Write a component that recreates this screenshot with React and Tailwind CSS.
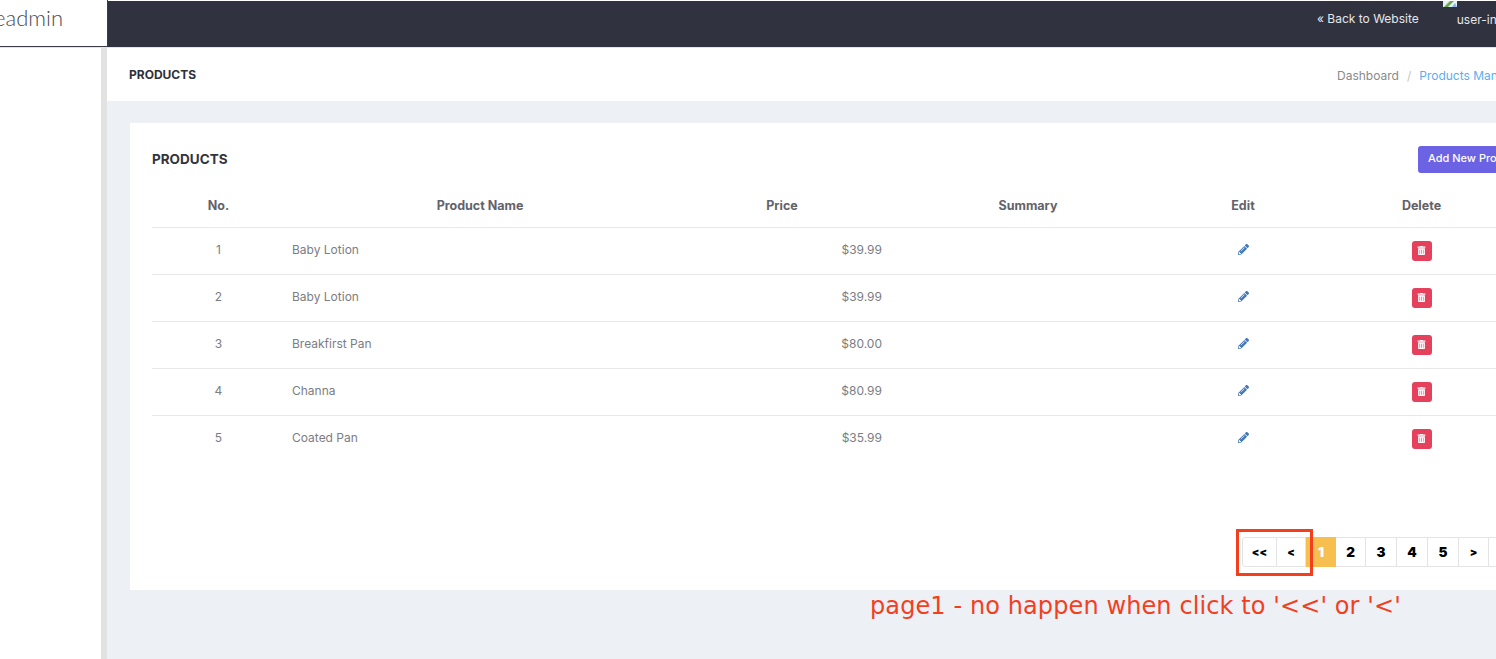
import React from "react";
import { FaPencilAlt, FaTrashAlt } from "react-icons/fa";

const rows = [
  ["1", "Baby Lotion", "$39.99"],
  ["2", "Baby Lotion", "$39.99"],
  ["3", "Breakfirst Pan", "$80.00"],
  ["4", "Channa", "$80.99"],
  ["5", "Coated Pan", "$35.99"],
];

const pages = [
  ["<<", "w-[35px]", "text-[11px]"],
  ["<", "w-[29px]", "text-[11px]"],
  ["1", "w-[30px]", "text-[13.5px]"],
  ["2", "w-[30px]", "text-[13.5px]"],
  ["3", "w-[31px]", "text-[13.5px]"],
  ["4", "w-[31px]", "text-[13.5px]"],
  ["5", "w-[31px]", "text-[13.5px]"],
  [">", "w-[30px]", "text-[11px]"],
  [">>", "w-[35px]", "text-[11px]"],
];

function BrokenImage() {
  return (
    <svg width="14" height="6" viewBox="0 0 14 6" className="block">
      <rect x="0" y="0" width="14" height="6" fill="#e8eef4" />
      <path d="M1 6 L7 0 L11 0 L5 6 Z" fill="#6aa84f" />
      <path d="M9 6 L12 2 L14 6 Z" fill="#8ab4e8" />
    </svg>
  );
}

export default function App() {
  return (
    <div className="relative h-[659px] w-[1496px] overflow-hidden bg-white font-['Inter','Liberation_Sans',sans-serif]">
      <header className="flex h-[48px] border-b border-b-[#e4e5e9]">
        <div className="flex w-[108px] shrink-0 items-center justify-end overflow-hidden border-b border-r border-[#3a3b47] bg-white pb-[12px] pr-[44px]">
          <span className="whitespace-nowrap font-['Lato',sans-serif] text-[22px] font-light text-[#4a4b55]">eadmin</span>
        </div>
        <div className="mt-px flex flex-1 overflow-hidden bg-[#30323f]">
          <a className="ml-[1209px] mt-[10px] whitespace-nowrap text-[12px] leading-4 text-[#e6e7ea]">« Back to Website</a>
          <div className="ml-[24px] flex flex-col">
            <BrokenImage />
            <span className="ml-[14px] mt-[5px] whitespace-nowrap text-[12px] leading-4 text-[#e6e7ea]">user-info</span>
          </div>
        </div>
      </header>

      <div className="flex h-[611px]">
        <aside className="flex w-[107px] shrink-0 justify-end bg-white">
          <div className="h-full w-[6px] bg-[#e2e2e2]" />
        </aside>
        <main className="flex-1 overflow-hidden bg-[#edf0f5]">
          <div className="flex h-[53px] w-[1480px] items-center bg-white pl-[22px]">
            <h1 className="w-[1208px] shrink-0 text-[12px] font-bold text-[#2f3038]">PRODUCTS</h1>
            <nav className="flex items-center whitespace-nowrap pt-[2px] text-[12px]">
              <span className="text-[#8a8a8a]">Dashboard</span>
              <span className="mx-[8px] text-[#c4c4c4]">/</span>
              <span className="text-[#5aaef0]">Products Management</span>
            </nav>
          </div>

          <section className="ml-[23px] mt-[22px] h-[467px] w-[1430px] bg-white px-[22px] pt-[23px]">
            <div className="flex h-[27px] items-center justify-between">
              <h2 className="text-[13.5px] font-bold text-[#33343c]">PRODUCTS</h2>
              <button className="h-[27px] w-[120px] whitespace-nowrap rounded-[3px] bg-[#6c63e4] pb-[2px] pl-[10px] text-left text-[11px] font-medium text-white">Add New Product</button>
            </div>
            <table className="mt-[9px] w-[1372px] table-fixed border-collapse text-[12px]">
              <colgroup>
                <col className="w-[133px]" />
                <col className="w-[390px]" />
                <col className="w-[214px]" />
                <col className="w-[278px]" />
                <col className="w-[152px]" />
                <col className="w-[205px]" />
              </colgroup>
              <thead>
                <tr className="h-[45px] border-b border-b-[#e8e8e8] text-[12.5px] font-semibold text-[#62636a]">
                  <th className="pt-[5px] text-center">No.</th>
                  <th className="pt-[5px] text-center">Product Name</th>
                  <th className="pt-[5px] text-center">Price</th>
                  <th className="pt-[5px] text-center">Summary</th>
                  <th className="pt-[5px] text-center">Edit</th>
                  <th className="pt-[5px] text-center">Delete</th>
                </tr>
              </thead>
              <tbody className="text-[#7c7d83]">
                {rows.map((r, i) => (
                  <tr key={r[0]} className={i < 4 ? "h-[47px] border-b border-b-[#e8e8e8]" : "h-[47px]"}>
                    <td className="pb-[2px] text-center">{r[0]}</td>
                    <td className="pb-[2px] pl-[7px]">{r[1]}</td>
                    <td className="pb-[2px] pr-[7px] text-right">{r[2]}</td>
                    <td />
                    <td className="pb-[3px]">
                      <div className="flex justify-center">
                        <FaPencilAlt className="h-[11px] w-[11px] text-[#4278b8]" />
                      </div>
                    </td>
                    <td>
                      <div className="flex justify-center">
                        <span className="flex h-[20px] w-[20px] items-center justify-center rounded-[3px] bg-[#e5405c]">
                          <FaTrashAlt className="h-[9px] w-[9px] text-white" />
                        </span>
                      </div>
                    </td>
                  </tr>
                ))}
              </tbody>
            </table>
            <div className="ml-[1090px] mt-[75px] flex h-[30px] w-fit">
              {pages.map(([label, w, size], i) => (
                <span
                  key={label}
                  className={
                    label === "1"
                      ? `flex ${w} ${size} items-center justify-center bg-[#f6bf4f] font-black text-white`
                      : `flex ${w} ${size} items-center justify-center border-y border-r border-[#e4e4e4] bg-white font-black text-black ${i === 0 ? "rounded-l-[3px] border-l" : ""}`
                  }
                >
                  {label}
                </span>
              ))}
            </div>
          </section>
        </main>
      </div>

      <div className="absolute left-[1236px] top-[529px] h-[47px] w-[77px] border-[3px] border-[#f2401f]" />
      <div className="absolute left-[870px] top-[591px] whitespace-nowrap font-['DejaVu_Sans',sans-serif] text-[24px] leading-[30px] tracking-[0.1px] text-[#f2401f]">
        page1 - no happen when click to '&lt;&lt;' or '&lt;'
      </div>
    </div>
  );
}
